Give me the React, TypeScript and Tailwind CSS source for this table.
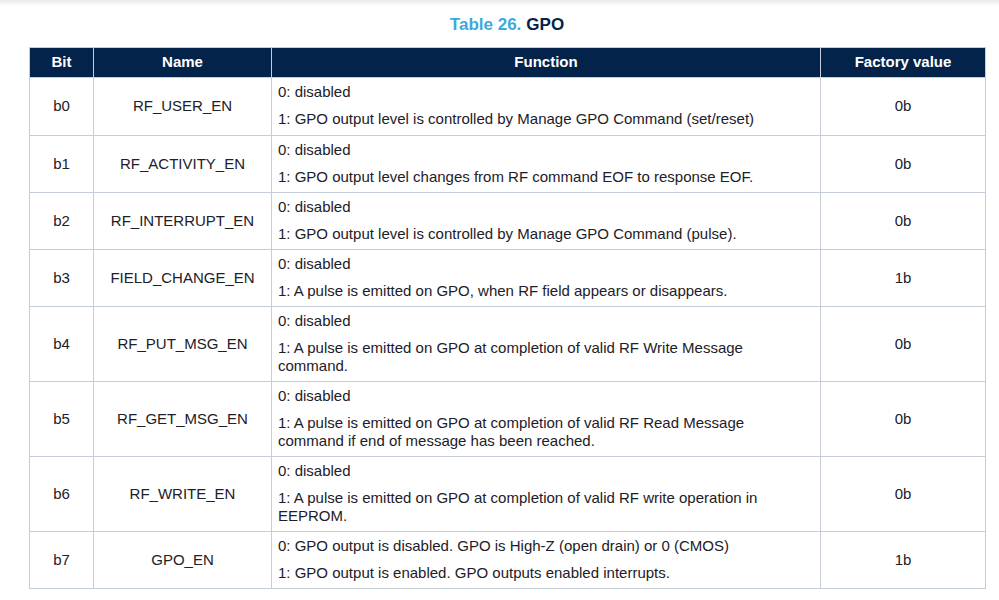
const rows: { bit: string; name: string; fn: string[][]; value: string; h: string }[] = [
  {
    bit: "b0",
    name: "RF_USER_EN",
    fn: [["0: disabled"], ["1: GPO output level is controlled by Manage GPO Command (set/reset)"]],
    value: "0b",
    h: "h-[58px]",
  },
  {
    bit: "b1",
    name: "RF_ACTIVITY_EN",
    fn: [["0: disabled"], ["1: GPO output level changes from RF command EOF to response EOF."]],
    value: "0b",
    h: "h-[56px]",
  },
  {
    bit: "b2",
    name: "RF_INTERRUPT_EN",
    fn: [["0: disabled"], ["1: GPO output level is controlled by Manage GPO Command (pulse)."]],
    value: "0b",
    h: "h-[56px]",
  },
  {
    bit: "b3",
    name: "FIELD_CHANGE_EN",
    fn: [["0: disabled"], ["1: A pulse is emitted on GPO, when RF field appears or disappears."]],
    value: "1b",
    h: "h-[56px]",
  },
  {
    bit: "b4",
    name: "RF_PUT_MSG_EN",
    fn: [["0: disabled"], ["1: A pulse is emitted on GPO at completion of valid RF Write Message", "command."]],
    value: "0b",
    h: "h-[74px]",
  },
  {
    bit: "b5",
    name: "RF_GET_MSG_EN",
    fn: [
      ["0: disabled"],
      ["1: A pulse is emitted on GPO at completion of valid RF Read Message", "command if end of message has been reached."],
    ],
    value: "0b",
    h: "h-[74px]",
  },
  {
    bit: "b6",
    name: "RF_WRITE_EN",
    fn: [["0: disabled"], ["1: A pulse is emitted on GPO at completion of valid RF write operation in", "EEPROM."]],
    value: "0b",
    h: "h-[74px]",
  },
  {
    bit: "b7",
    name: "GPO_EN",
    fn: [
      ["0: GPO output is disabled. GPO is High-Z (open drain) or 0 (CMOS)"],
      ["1: GPO output is enabled. GPO outputs enabled interrupts."],
    ],
    value: "1b",
    h: "h-[56px]",
  },
];

export default function App() {
  return (
    <div className="w-[999px] h-[600px] bg-white overflow-hidden font-['Liberation_Sans',Arial,sans-serif] text-[#1d2028]">
      <div className="h-[6px] bg-gradient-to-b from-[#e9e9e9] to-white" />
      <h1 className="h-[41px] flex items-center justify-center text-[17px] font-bold pl-[15px] pb-[3px]">
        <span className="text-[#3ba9dc]">Table 26.</span>
        <span className="ml-[5px] text-[#03234b]">GPO</span>
      </h1>
      <table className="ml-[29px] border-collapse table-fixed w-[956px] border border-[#c5cdd8] text-[15px]">
        <colgroup>
          <col className="w-[64px]" />
          <col className="w-[178px]" />
          <col className="w-[549px]" />
          <col className="w-[165px]" />
        </colgroup>
        <thead>
          <tr className="h-[30px] bg-[#03234b] text-white font-bold">
            <th className="border border-[#c5cdd8] font-bold">Bit</th>
            <th className="border border-[#c5cdd8] font-bold">Name</th>
            <th className="border border-[#c5cdd8] font-bold">Function</th>
            <th className="border border-[#c5cdd8] font-bold">Factory value</th>
          </tr>
        </thead>
        <tbody>
          {rows.map((r) => (
            <tr key={r.bit} className={r.h}>
              <td className="border border-[#c5cdd8] text-center">{r.bit}</td>
              <td className="border border-[#c5cdd8] text-center">{r.name}</td>
              <td className="border border-[#c5cdd8] px-[6px] pt-[5px] pb-[6px] align-top">
                <div className="flex flex-col gap-[9px] leading-[18px]">
                  {r.fn.map((p, i) => (
                    <p key={i}>
                      {p.map((line, j) => (
                        <span key={j} className="block whitespace-nowrap">
                          {line}
                        </span>
                      ))}
                    </p>
                  ))}
                </div>
              </td>
              <td className="border border-[#c5cdd8] text-center">{r.value}</td>
            </tr>
          ))}
        </tbody>
      </table>
    </div>
  );
}
